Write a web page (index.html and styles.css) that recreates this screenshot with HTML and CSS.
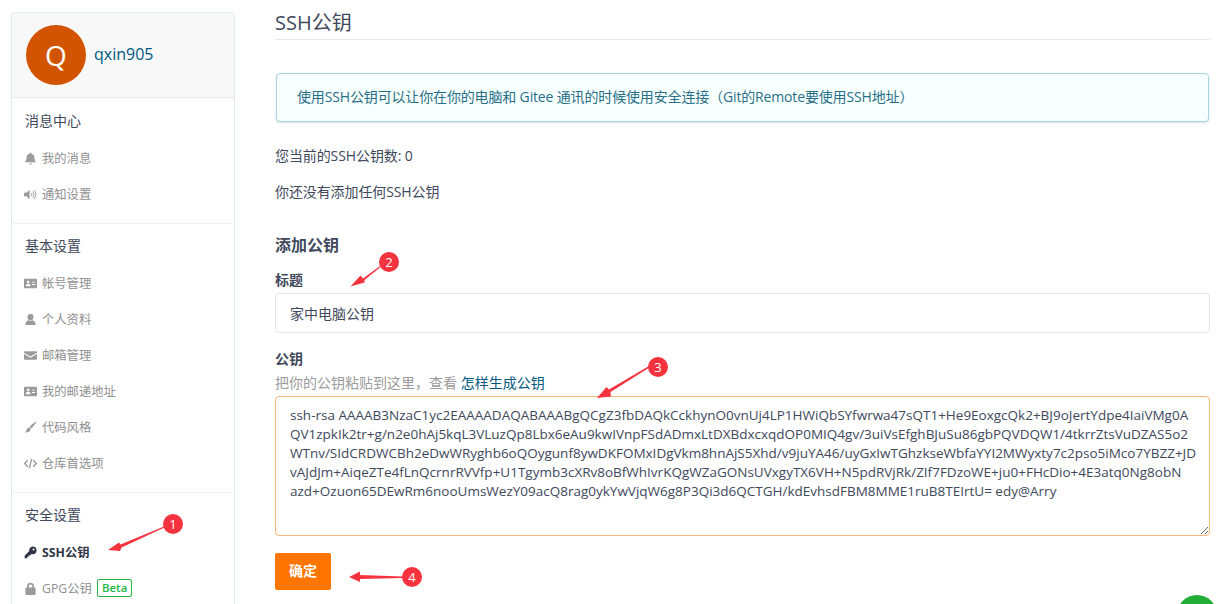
FILE: index.html
```html
<!DOCTYPE html>
<html lang="zh">
<head>
<meta charset="utf-8">
<title>SSH公钥</title>
<link rel="stylesheet" href="styles.css">
</head>
<body>
<div class="page">
  <aside class="sidebar">
    <div class="profile">
      <div class="avatar">Q</div>
      <a class="username">qxin905</a>
    </div>
    <section class="group">
      <h4 class="group-title">消息中心</h4>
      <a class="item"><svg class="ico" viewBox="0 0 14 14"><path d="M7 0.5a1 1 0 0 1 1 1v.4c2.2.5 3.3 2.2 3.3 4.4 0 2.4.7 3.6 1.7 4.7H1c1-1.100 1.700-2.300 1.700-4.700 0-2.200 1.100-3.900 3.300-4.400v-.4a1 1 0 0 1 1-1zM5.500 12h3a1.500 1.500 0 0 1-3 0z"/></svg>我的消息</a>
      <a class="item"><svg class="ico" viewBox="0 0 14 14"><path d="M0 5h2.500L6 2v10L2.500 9H0z"/><path class="line" d="M7.600 5.200a2.500 2.500 0 0 1 0 3.600M9.200 3.700a4.600 4.600 0 0 1 0 6.600M10.900 2.300a6.600 6.600 0 0 1 0 9.400"/></svg>通知设置</a>
    </section>
    <section class="group">
      <h4 class="group-title">基本设置</h4>
      <a class="item"><svg class="ico" viewBox="0 0 14 14"><path fill-rule="evenodd" d="M1 2h12a1 1 0 0 1 1 1v8a1 1 0 0 1-1 1H1a1 1 0 0 1-1-1V3a1 1 0 0 1 1-1zM4.500 4a1.400 1.400 0 1 0 0 2.800 1.400 1.400 0 0 0 0-2.800zM2 10h5c0-1.800-1-2.600-2.500-2.600S2 8.200 2 10zM8.500 5v1H12V5zM8.500 7.500v1H12v-1z"/></svg>帐号管理</a>
      <a class="item"><svg class="ico" viewBox="0 0 14 14"><path d="M7 1a3.300 3.300 0 0 1 3.300 3.500C10.300 6.500 9 8 7 8S3.700 6.500 3.700 4.500A3.300 3.300 0 0 1 7 1zM1.500 13c0-3 1.200-4.700 3.200-5.100.6.500 1.400.8 2.300.8s1.700-.3 2.300-.8c2 .4 3.200 2.100 3.200 5.100z"/></svg>个人资料</a>
      <a class="item"><svg class="ico" viewBox="0 0 14 14"><path d="M1 2.500h12a1 1 0 0 1 1 1v.5L7 8 0 4v-.5a1 1 0 0 1 1-1zM0 5.500l7 4 7-4v5a1 1 0 0 1-1 1H1a1 1 0 0 1-1-1z"/></svg>邮箱管理</a>
      <a class="item"><svg class="ico" viewBox="0 0 14 14"><path fill-rule="evenodd" d="M1 2h12a1 1 0 0 1 1 1v8a1 1 0 0 1-1 1H1a1 1 0 0 1-1-1V3a1 1 0 0 1 1-1zM4.500 4a1.400 1.400 0 1 0 0 2.800 1.400 1.400 0 0 0 0-2.800zM2 10h5c0-1.800-1-2.600-2.500-2.600S2 8.200 2 10zM8.500 5v1H12V5zM8.500 7.500v1H12v-1z"/></svg>我的邮递地址</a>
      <a class="item"><svg class="ico" viewBox="0 0 14 14"><path d="M13.500.5c.4.400-3.700 6-5.600 7.500L6 6.100C7.500 4.200 13.100.1 13.500.5zM5.300 7c1.100.1 1.900.9 1.900 2 0 2.500-2.800 3.700-6.200 3.200 1.700-1 1.500-2 2-3.300.4-1.100 1.200-1.900 2.300-1.900z"/></svg>代码风格</a>
      <a class="item"><svg class="ico" viewBox="0 0 14 14"><path class="line wide" d="M4 3.500L.8 7 4 10.500M10 3.500L13.200 7 10 10.500M8.300 2L5.700 12"/></svg>仓库首选项</a>
    </section>
    <section class="group group-last">
      <h4 class="group-title">安全设置</h4>
      <a class="item item-active"><svg class="ico" viewBox="0 0 14 14"><path fill-rule="evenodd" d="M9.300.5a4.200 4.200 0 0 1 0 8.400c-.5 0-1-.1-1.400-.2L6.500 10.100H5v1.500H3.500v1.500H.7v-2.600l5-5a4.200 4.200 0 0 1 3.600-5zM10.300 2.600a1.100 1.100 0 1 0 0 2.200 1.100 1.100 0 0 0 0-2.200z"/></svg>SSH公钥</a>
      <a class="item"><svg class="ico" viewBox="0 0 14 14"><path fill-rule="evenodd" d="M7 .8a3.800 3.800 0 0 1 3.800 3.800V6h.7a1 1 0 0 1 1 1v6a1 1 0 0 1-1 1h-9a1 1 0 0 1-1-1V7a1 1 0 0 1 1-1h.7V4.600A3.800 3.800 0 0 1 7 .8zM7 2.700a1.900 1.900 0 0 0-1.900 1.900V6h3.800V4.600A1.900 1.900 0 0 0 7 2.700z"/></svg>GPG公钥<span class="badge">Beta</span></a>
    </section>
  </aside>

  <main class="content">
    <h2 class="page-title">SSH公钥</h2>
    <div class="notice">使用SSH公钥可以让你在你的电脑和 Gitee 通讯的时候使用安全连接（Git的Remote要使用SSH地址）</div>
    <p class="line-text first">您当前的SSH公钥数: 0</p>
    <p class="line-text">你还没有添加任何SSH公钥</p>
    <h3 class="form-title">添加公钥</h3>
    <label class="field-label">标题</label>
    <input class="text-input" type="text" value="家中电脑公钥">
    <label class="field-label key-label">公钥</label>
    <p class="hint">把你的公钥粘贴到这里，查看 <a class="link">怎样生成公钥</a></p>
    <textarea class="key-input" wrap="off">ssh-rsa AAAAB3NzaC1yc2EAAAADAQABAAABgQCgZ3fbDAQkCckhynO0vnUj4LP1HWiQbSYfwrwa47sQT1+He9EoxgcQk2+BJ9oJertYdpe4IaiVMg0A
QV1zpkIk2tr+g/n2e0hAj5kqL3VLuzQp8Lbx6eAu9kwIVnpFSdADmxLtDXBdxcxqdOP0MIQ4gv/3uiVsEfghBJuSu86gbPQVDQW1/4tkrrZtsVuDZAS5o2
WTnv/SIdCRDWCBh2eDwWRyghb6oQOygunf8ywDKFOMxIDgVkm8hnAjS5Xhd/v9juYA46/uyGxIwTGhzkseWbfaYYI2MWyxty7c2pso5iMco7YBZZ+JD
vAJdJm+AiqeZTe4fLnQcrnrRVVfp+U1Tgymb3cXRv8oBfWhIvrKQgWZaGONsUVxgyTX6VH+N5pdRVjRk/ZIf7FDzoWE+ju0+FHcDio+4E3atq0Ng8obN
azd+Ozuon65DEwRm6nooUmsWezY09acQ8rag0ykYwVjqW6g8P3Qi3d6QCTGH/kdEvhsdFBM8MME1ruB8TEIrtU= edy@Arry</textarea>
    <button class="submit" type="button">确定</button>
  </main>
</div>

<svg class="annotations" width="1221" height="604" viewBox="0 0 1221 604">
  <circle class="float-btn" cx="1197" cy="615" r="20"/>
  <g class="arrow">
    <path d="M164 526.500L120.500 544.500 119 542.500 108 550 120 551 121.500 547.500 164.500 527.500z"/>
    <path d="M380 266L363 278.500 360.500 275.500 350.500 286.500 364.500 282.500 364.500 280 380.500 267z"/>
    <path d="M649 366L609 389.500 606.500 387 597 398 611 396.500 610.500 392 649.500 367.500z"/>
    <path d="M403 576.500L360 575 360 571.500 349 577 360 582 360 579 403 578z"/>
  </g>
  <g class="pin">
    <circle cx="173" cy="524" r="10"/><text x="173" y="528.500">1</text>
    <circle cx="389" cy="262" r="10"/><text x="389" y="266.500">2</text>
    <circle cx="658" cy="367" r="10"/><text x="658" y="371.500">3</text>
    <circle cx="412" cy="577" r="10"/><text x="412" y="581.500">4</text>
  </g>
</svg>
</body>
</html>
```
FILE: styles.css
```css
html, body {
  margin: 0;
  height: 604px;
  overflow: hidden;
  background: #fff;
}
body {
  position: relative;
  font-family: "Open Sans", "Noto Sans CJK SC", sans-serif;
  color: #40485b;
  font-size: 14px;
}
.page {
  display: flex;
  align-items: stretch;
  gap: 40px;
  box-sizing: border-box;
  height: 604px;
  padding: 12px 11px 0 11px;
  overflow: hidden;
}
.sidebar {
  flex: 0 0 224px;
  box-sizing: border-box;
  overflow: hidden;
  border: 1px solid #e3e9ed;
  border-bottom: 0;
  border-radius: 4px 4px 0 0;
}
.profile {
  display: flex;
  align-items: center;
  gap: 8px;
  height: 85px;
  box-sizing: border-box;
  margin-bottom: 1px;
  padding: 0 14px;
  background: #f8f8f8;
  border-bottom: 1px solid #e3e9ed;
}
.avatar {
  width: 60px;
  height: 60px;
  border-radius: 50%;
  background: #d35400;
  color: #fff;
  font-size: 28px;
  font-weight: 500;
  line-height: 60px;
  text-align: center;
}
.username {
  padding-bottom: 3px;
  color: #005980;
  font-size: 16px;
}
.group {
  padding: 4px 1px 11px 12px;
  margin: 0 1px;
  border-bottom: 1px solid #eef0f2;
}
.group-last { border-bottom: 0; }
.group-title {
  margin: 0 0 1px;
  height: 36px;
  line-height: 36px;
  font-size: 14px;
  font-weight: 400;
  color: #40485b;
}
.item {
  display: flex;
  align-items: center;
  height: 36px;
  font-size: 12.300px;
  color: #8f8f8f;
}
.item-active {
  font-weight: 700;
  color: #2e3445;
}
.ico {
  flex: none;
  width: 13px;
  height: 13px;
  margin: 0 5px 0 -1px;
  fill: #9b9b9b;
}
.item-active .ico { fill: #2e3445; }
.line {
  fill: none;
  stroke: #9b9b9b;
  stroke-width: 1;
}
.line.wide { stroke-width: 1.500; }
.badge {
  margin-left: 5px;
  padding: 0 4px;
  height: 16px;
  line-height: 16px;
  border: 1px solid #21ba45;
  border-radius: 2px;
  color: #21ba45;
  font-size: 11.500px;
  font-weight: 600;
}
.content {
  flex: 1;
  min-width: 0;
}
.page-title {
  margin: 0;
  padding: 0 0 5px;
  height: 22px;
  line-height: 22px;
  font-size: 20px;
  font-weight: 400;
  border-bottom: 1px solid #e3e9ed;
}
.notice {
  margin: 33px 1px 0;
  box-sizing: border-box;
  height: 49px;
  line-height: 46px;
  padding: 0 20px;
  background: #f8ffff;
  color: #276f86;
  font-size: 14px;
  letter-spacing: -.15px;
  border: 1px solid #a9d5de;
  border-radius: 4px;
  box-shadow: 0 1px 2px rgba(34, 36, 38, .15);
}
.line-text {
  margin: 0;
  height: 36px;
  line-height: 36px;
  font-size: 14px;
  letter-spacing: -.1px;
}
.line-text.first { margin-top: 16px; }
.form-title {
  margin: 22px 0 0;
  height: 26px;
  line-height: 26px;
  font-size: 16px;
  font-weight: 700;
}
.field-label {
  display: block;
  margin-top: 12px;
  line-height: 20px;
  font-size: 14px;
  font-weight: 700;
}
.text-input {
  display: block;
  box-sizing: border-box;
  width: 100%;
  height: 40px;
  margin-top: 3px;
  padding: 0 14px;
  border: 1px solid #e2e5ee;
  border-radius: 4px;
  outline: 0;
  font: inherit;
  font-size: 14px;
  color: #40485b;
}
.key-label { margin-top: 16px; }
.hint {
  margin: 4px 0 0;
  line-height: 20px;
  font-size: 14px;
  color: #9b9b9b;
}
.link { color: #005980; }
.key-input {
  display: block;
  box-sizing: border-box;
  width: 100%;
  height: 140px;
  margin-top: 3px;
  padding: 9px 14px;
  border: 1px solid #f8b878;
  border-radius: 4px;
  outline: 0;
  font: inherit;
  font-size: 13.500px;
  line-height: 19px;
  color: #40485b;
  overflow: hidden;
  resize: vertical;
}
.submit {
  display: block;
  margin-top: 17px;
  padding: 0 0 3px;
  width: 56px;
  height: 37px;
  border: 0;
  border-radius: 2px;
  background: #ff7500;
  color: #fff;
  font: inherit;
  font-size: 14px;
  font-weight: 700;
}
.annotations {
  position: absolute;
  left: 0;
  top: 0;
  pointer-events: none;
}
.float-btn { fill: #21ad36; }
.arrow { fill: #f5333f; }
.pin circle { fill: #f5333f; }
.pin text {
  fill: #fff;
  font-size: 13px;
  text-anchor: middle;
}
```
